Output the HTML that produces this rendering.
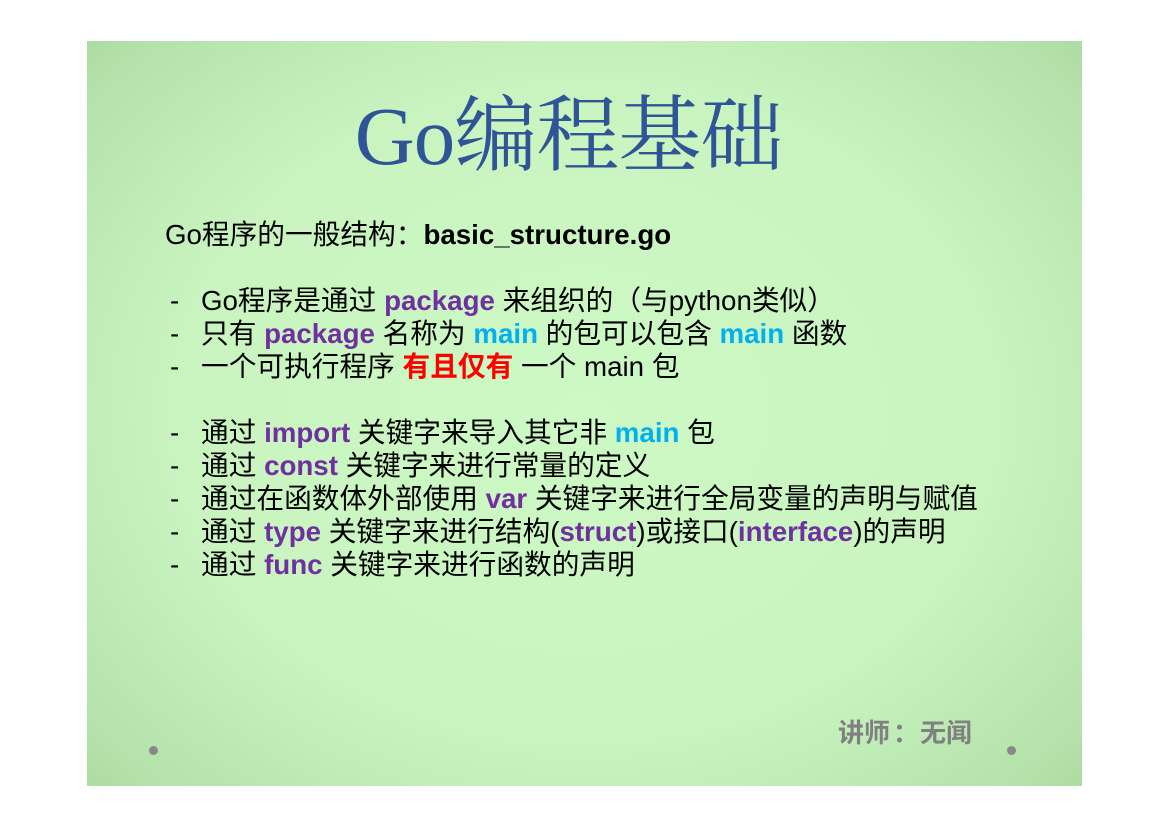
<!DOCTYPE html>
<html><head><meta charset="utf-8"><style>
body{margin:0;width:1169px;height:827px;background:#fff;position:relative;overflow:hidden;font-family:"Liberation Sans","Noto Sans CJK SC",sans-serif}
#s{position:absolute;left:87px;top:41px;width:995px;height:745px;background:radial-gradient(ellipse 75% 80% at 50% 50%,#cdf9c5 0%,#c9f4c0 55%,#b4e2aa 85%,#a3d296 100%)}
.t{position:absolute;left:-16px;width:995px;top:40px;text-align:center;font-family:"Liberation Serif","Noto Serif CJK SC",serif;font-size:83px;color:#2f5597;line-height:110px;letter-spacing:-1px}
.l{position:absolute;font-size:27.7px;line-height:33px;color:#000;white-space:nowrap;letter-spacing:0}
.d{position:absolute;left:83px}
.x{position:absolute;left:114px}
.p{color:#7030a0;font-weight:bold}.c{color:#00b0f0;font-weight:bold}.r{color:#f00;font-weight:bold}
.dot{position:absolute;width:9px;height:9px;border-radius:50%;background:#888}
</style></head><body><div id="s">
<div class="l" style="left:78px;top:177px">Go程序的一般结构：<b>basic_structure.go</b></div>
<div class="t">Go编程基础</div>
<div class="l" style="left:0;top:243px;width:995px;height:300px">
<div style="position:relative;height:33px"><span class="d">-</span><span class="x">Go程序是通过 <span class="p">package</span> 来组织的（与python类似）</span></div>
<div style="position:relative;height:33px"><span class="d">-</span><span class="x">只有 <span class="p">package</span> 名称为 <span class="c">main</span> 的包可以包含 <span class="c">main</span> 函数</span></div>
<div style="position:relative;height:33px"><span class="d">-</span><span class="x">一个可执行程序 <span class="r">有且仅有</span> 一个 main 包</span></div>
<div style="position:relative;height:33px"></div>
<div style="position:relative;height:33px"><span class="d">-</span><span class="x">通过 <span class="p">import</span> 关键字来导入其它非 <span class="c">main</span> 包</span></div>
<div style="position:relative;height:33px"><span class="d">-</span><span class="x">通过 <span class="p">const</span> 关键字来进行常量的定义</span></div>
<div style="position:relative;height:33px"><span class="d">-</span><span class="x">通过在函数体外部使用 <span class="p">var</span> 关键字来进行全局变量的声明与赋值</span></div>
<div style="position:relative;height:33px"><span class="d">-</span><span class="x">通过 <span class="p">type</span> 关键字来进行结构(<span class="p">struct</span>)或接口(<span class="p">interface</span>)的声明</span></div>
<div style="position:relative;height:33px"><span class="d">-</span><span class="x">通过 <span class="p">func</span> 关键字来进行函数的声明</span></div>
</div>
<div class="l" style="left:751px;top:676px;color:#808080;font-weight:bold;font-size:26px">讲师<span style="padding:0 1px 0 3px">：</span>无闻</div>
<div class="dot" style="left:62px;top:705px"></div>
<div class="dot" style="left:920px;top:705px"></div>
</div></body></html>
